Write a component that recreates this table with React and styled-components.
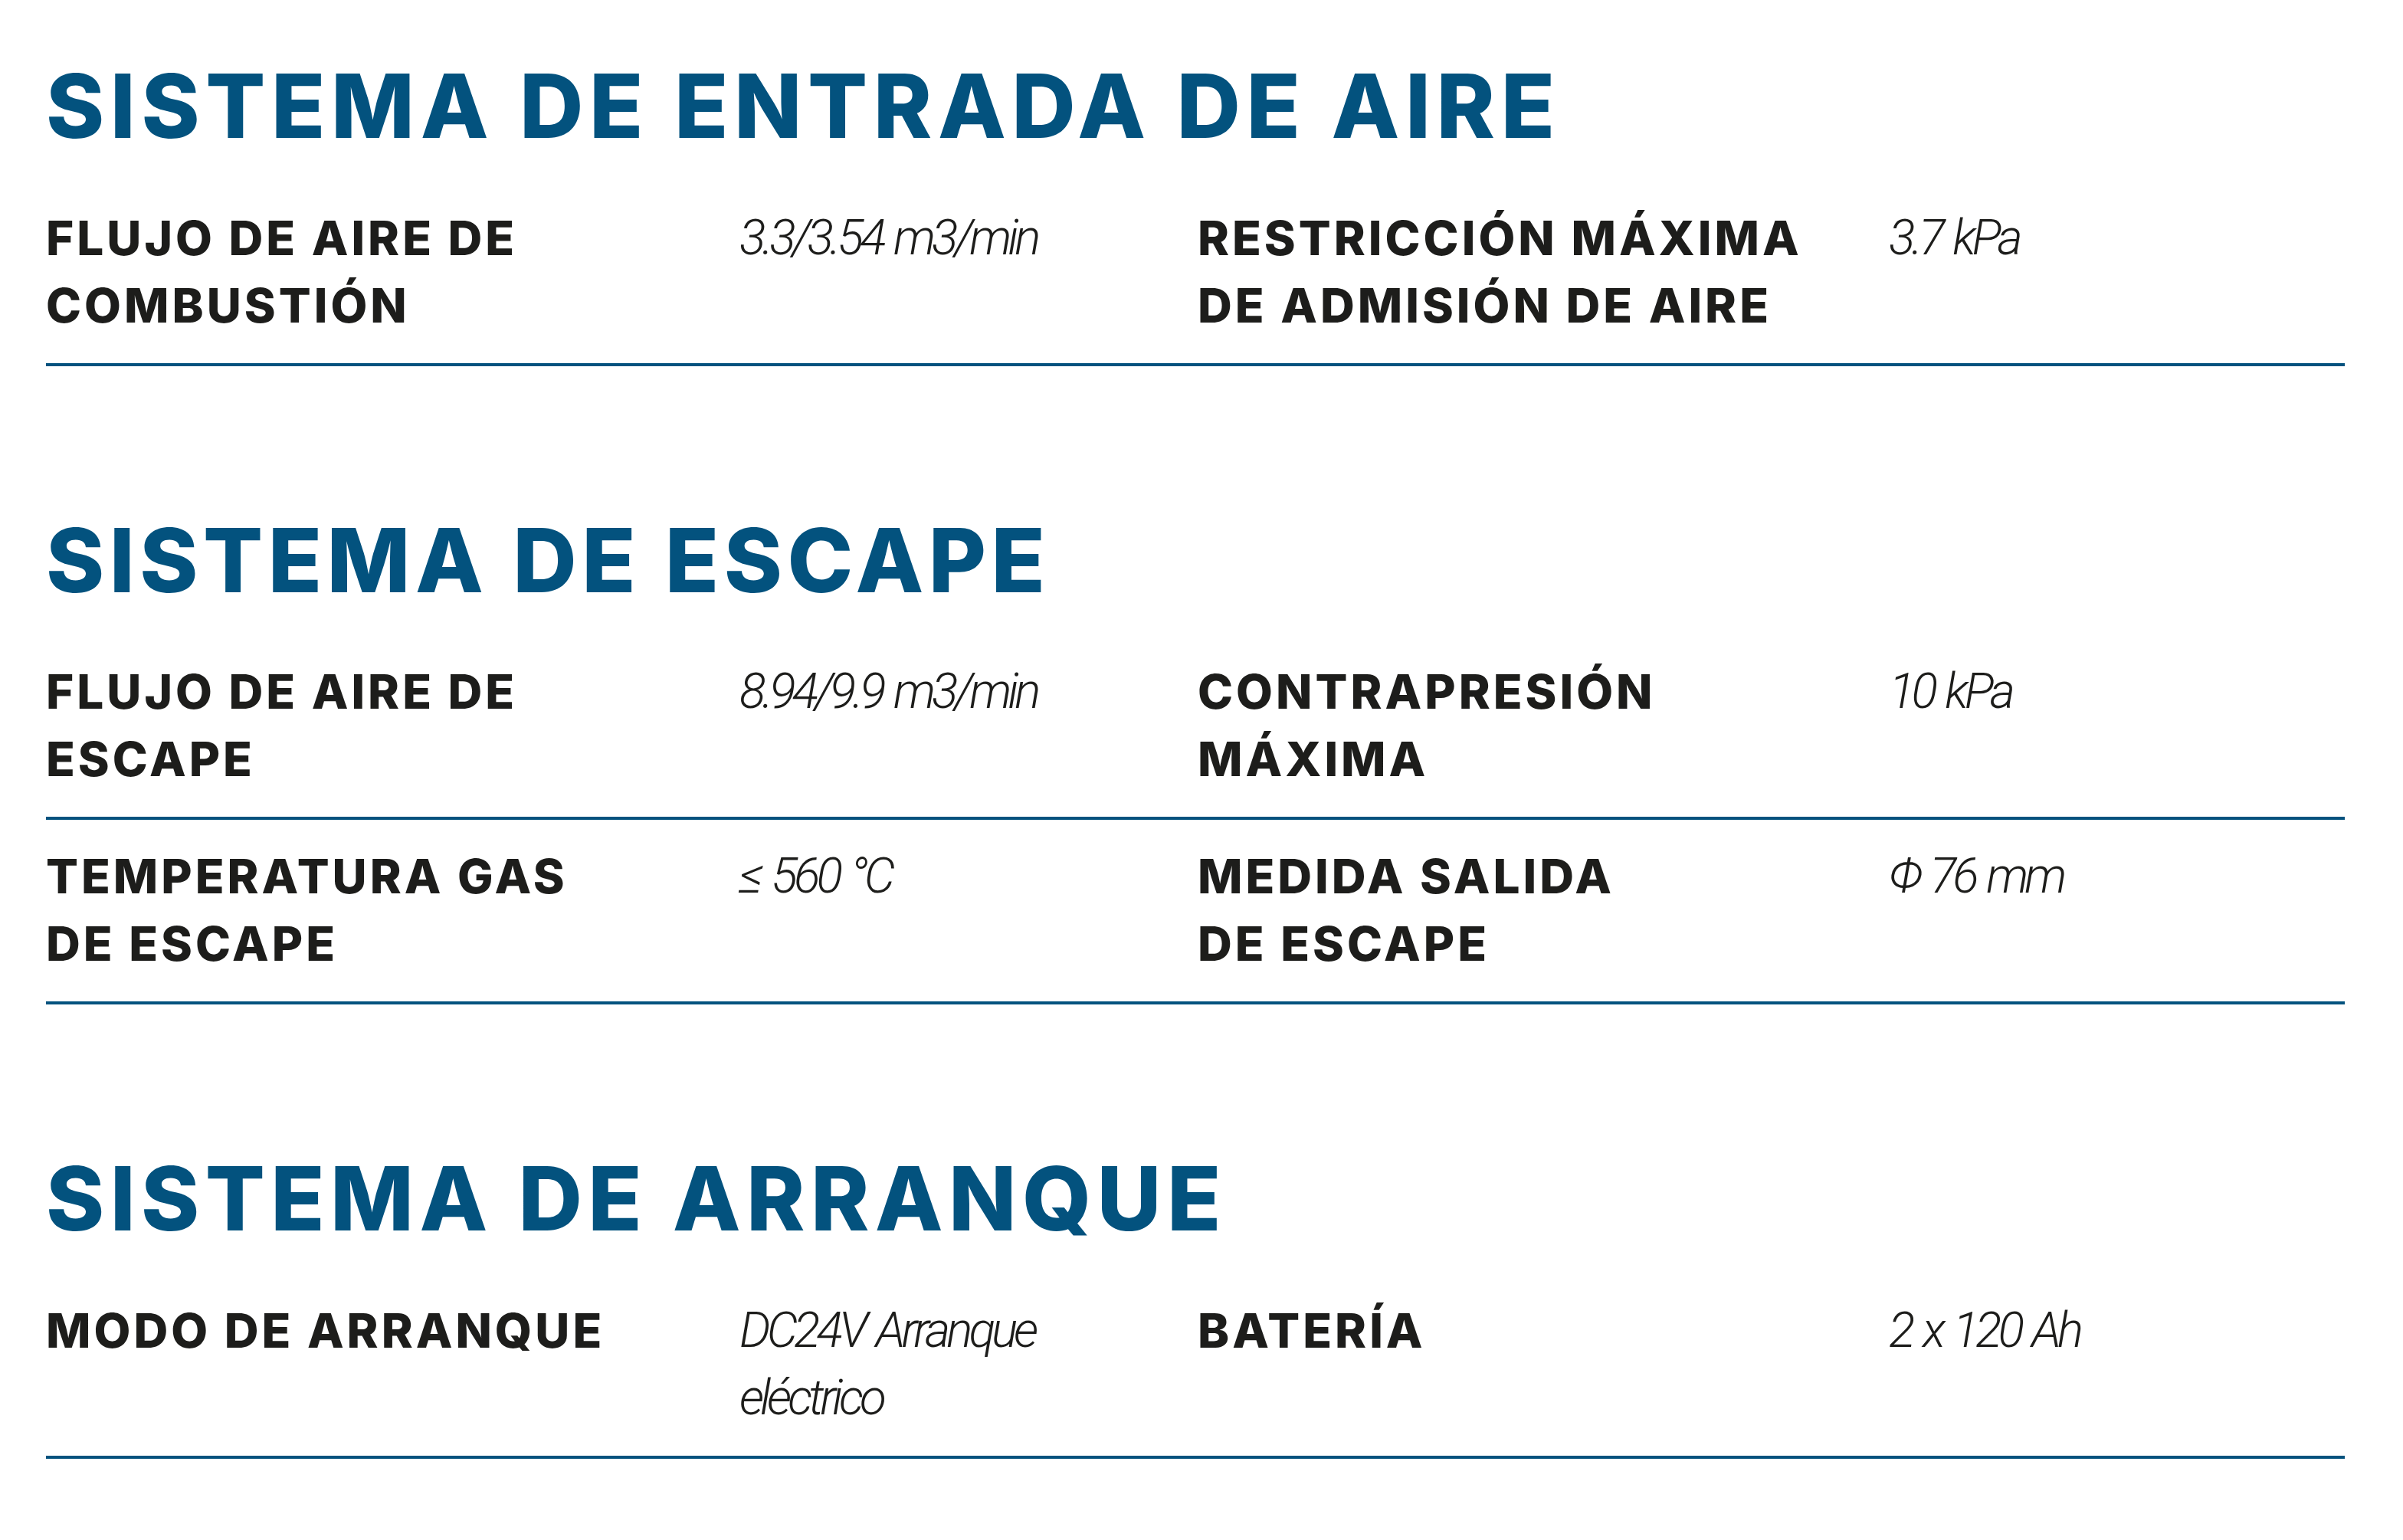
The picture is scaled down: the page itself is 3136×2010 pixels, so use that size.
import React from "react";
import styled, { createGlobalStyle } from "styled-components";

const Global = createGlobalStyle`
  html, body { margin: 0; padding: 0; background: #ffffff; }
  body { font-family: Inter, "Noto Sans", sans-serif; }
`;

const BLUE = "#03527e";
const INK = "#1d1d1b";

const Page = styled.main`
  width: 3000px;
  padding: 81px 0 80px 60px;
`;

const Section = styled.section`
  & + & { margin-top: 196px; }
`;

const Title = styled.h2`
  margin: 0 0 40px 0;
  font-family: Inter, sans-serif;
  font-weight: 800;
  font-size: 115.5px;
  line-height: 115.5px;
  letter-spacing: ${(p) => p.$track || 7}px;
  color: ${BLUE};
  white-space: nowrap;
`;

const Row = styled.div`
  display: grid;
  grid-template-columns: 905px 598px 902px 595px;
  padding: 30px 0 31px 0;
  border-bottom: 4px solid ${BLUE};
`;

const Label = styled.div`
  font-family: Inter, sans-serif;
  font-weight: 800;
  font-size: 62px;
  line-height: 88px;
  letter-spacing: 4px;
  color: ${INK};
  white-space: nowrap;
`;

const Value = styled.div`
  font-family: Roboto, sans-serif;
  font-weight: 300;
  font-style: italic;
  font-size: 64px;
  line-height: 88px;
  letter-spacing: -5px;
  word-spacing: 4px;
  color: ${INK};
  white-space: nowrap;
`;

const Lines = ({ lines }) =>
  lines.map((l, i) => (
    <React.Fragment key={i}>
      {i > 0 && <br />}
      {l}
    </React.Fragment>
  ));

const sections = [
  {
    title: "SISTEMA DE ENTRADA DE AIRE",
    track: 7.6,
    rows: [
      [
        ["FLUJO DE AIRE DE", "COMBUSTIÓN"],
        ["3.3/3.54 m3/min"],
        ["RESTRICCIÓN MÁXIMA", "DE ADMISIÓN DE AIRE"],
        ["3.7 kPa"],
      ],
    ],
  },
  {
    title: "SISTEMA DE ESCAPE",
    track: 6.5,
    rows: [
      [
        ["FLUJO DE AIRE DE", "ESCAPE"],
        ["8.94/9.9 m3/min"],
        ["CONTRAPRESIÓN", "MÁXIMA"],
        ["10 kPa"],
      ],
      [
        ["TEMPERATURA GAS", "DE ESCAPE"],
        ["≤ 560 °C"],
        ["MEDIDA SALIDA", "DE ESCAPE"],
        ["Φ 76 mm"],
      ],
    ],
  },
  {
    title: "SISTEMA DE ARRANQUE",
    track: 7.4,
    rows: [
      [
        ["MODO DE ARRANQUE"],
        ["DC24V Arranque", "eléctrico"],
        ["BATERÍA"],
        ["2 x 120 Ah"],
      ],
    ],
  },
];

export default function App() {
  return (
    <>
      <Global />
      <Page>
        {sections.map((s) => (
          <Section key={s.title}>
            <Title $track={s.track}>{s.title}</Title>
            {s.rows.map((r, i) => (
              <Row key={i}>
                <Label><Lines lines={r[0]} /></Label>
                <Value><Lines lines={r[1]} /></Value>
                <Label><Lines lines={r[2]} /></Label>
                <Value><Lines lines={r[3]} /></Value>
              </Row>
            ))}
          </Section>
        ))}
      </Page>
    </>
  );
}
